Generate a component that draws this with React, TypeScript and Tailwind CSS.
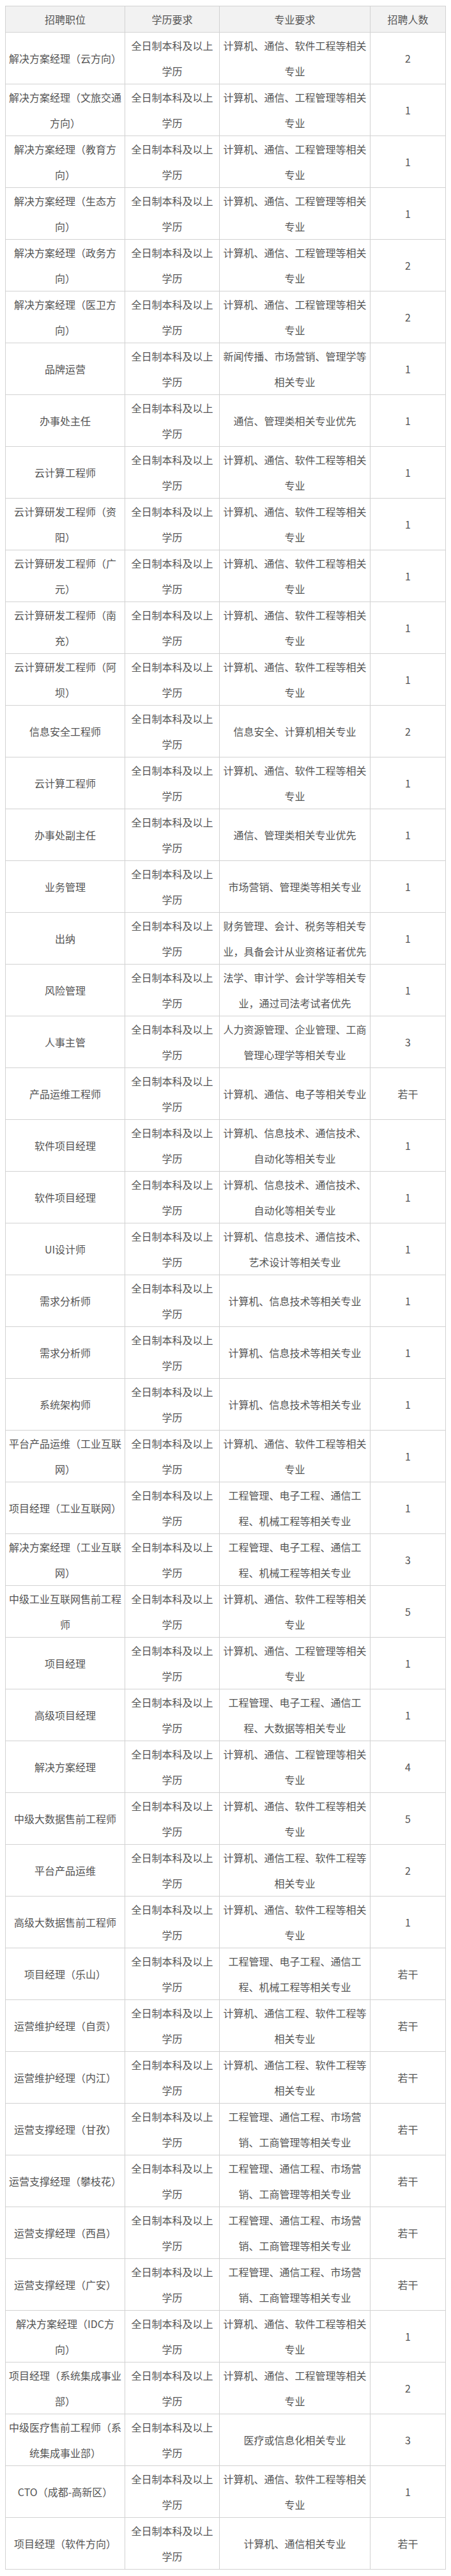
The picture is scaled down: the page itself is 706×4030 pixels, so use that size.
import React from "react";

type Row = [string, string, string];

const rows: Row[] = [
  ["解决方案经理（云方向）", "计算机、通信、软件工程等相关专业", "2"],
  ["解决方案经理（文旅交通方向）", "计算机、通信、工程管理等相关专业", "1"],
  ["解决方案经理（教育方向）", "计算机、通信、工程管理等相关专业", "1"],
  ["解决方案经理（生态方向）", "计算机、通信、工程管理等相关专业", "1"],
  ["解决方案经理（政务方向）", "计算机、通信、工程管理等相关专业", "2"],
  ["解决方案经理（医卫方向）", "计算机、通信、工程管理等相关专业", "2"],
  ["品牌运营", "新闻传播、市场营销、管理学等相关专业", "1"],
  ["办事处主任", "通信、管理类相关专业优先", "1"],
  ["云计算工程师", "计算机、通信、软件工程等相关专业", "1"],
  ["云计算研发工程师（资阳）", "计算机、通信、软件工程等相关专业", "1"],
  ["云计算研发工程师（广元）", "计算机、通信、软件工程等相关专业", "1"],
  ["云计算研发工程师（南充）", "计算机、通信、软件工程等相关专业", "1"],
  ["云计算研发工程师（阿坝）", "计算机、通信、软件工程等相关专业", "1"],
  ["信息安全工程师", "信息安全、计算机相关专业", "2"],
  ["云计算工程师", "计算机、通信、软件工程等相关专业", "1"],
  ["办事处副主任", "通信、管理类相关专业优先", "1"],
  ["业务管理", "市场营销、管理类等相关专业", "1"],
  ["出纳", "财务管理、会计、税务等相关专业，具备会计从业资格证者优先", "1"],
  ["风险管理", "法学、审计学、会计学等相关专业，通过司法考试者优先", "1"],
  ["人事主管", "人力资源管理、企业管理、工商管理心理学等相关专业", "3"],
  ["产品运维工程师", "计算机、通信、电子等相关专业", "若干"],
  ["软件项目经理", "计算机、信息技术、通信技术、自动化等相关专业", "1"],
  ["软件项目经理", "计算机、信息技术、通信技术、自动化等相关专业", "1"],
  ["UI设计师", "计算机、信息技术、通信技术、艺术设计等相关专业", "1"],
  ["需求分析师", "计算机、信息技术等相关专业", "1"],
  ["需求分析师", "计算机、信息技术等相关专业", "1"],
  ["系统架构师", "计算机、信息技术等相关专业", "1"],
  ["平台产品运维（工业互联网）", "计算机、通信、软件工程等相关专业", "1"],
  ["项目经理（工业互联网）", "工程管理、电子工程、通信工程、机械工程等相关专业", "1"],
  ["解决方案经理（工业互联网）", "工程管理、电子工程、通信工程、机械工程等相关专业", "3"],
  ["中级工业互联网售前工程师", "计算机、通信、软件工程等相关专业", "5"],
  ["项目经理", "计算机、通信、工程管理等相关专业", "1"],
  ["高级项目经理", "工程管理、电子工程、通信工程、大数据等相关专业", "1"],
  ["解决方案经理", "计算机、通信、工程管理等相关专业", "4"],
  ["中级大数据售前工程师", "计算机、通信、软件工程等相关专业", "5"],
  ["平台产品运维", "计算机、通信工程、软件工程等相关专业", "2"],
  ["高级大数据售前工程师", "计算机、通信、软件工程等相关专业", "1"],
  ["项目经理（乐山）", "工程管理、电子工程、通信工程、机械工程等相关专业", "若干"],
  ["运营维护经理（自贡）", "计算机、通信工程、软件工程等相关专业", "若干"],
  ["运营维护经理（内江）", "计算机、通信工程、软件工程等相关专业", "若干"],
  ["运营支撑经理（甘孜）", "工程管理、通信工程、市场营销、工商管理等相关专业", "若干"],
  ["运营支撑经理（攀枝花）", "工程管理、通信工程、市场营销、工商管理等相关专业", "若干"],
  ["运营支撑经理（西昌）", "工程管理、通信工程、市场营销、工商管理等相关专业", "若干"],
  ["运营支撑经理（广安）", "工程管理、通信工程、市场营销、工商管理等相关专业", "若干"],
  ["解决方案经理（IDC方向）", "计算机、通信、软件工程等相关专业", "1"],
  ["项目经理（系统集成事业部）", "计算机、通信、工程管理等相关专业", "2"],
  ["中级医疗售前工程师（系统集成事业部）", "医疗或信息化相关专业", "3"],
  ["CTO（成都-高新区）", "计算机、通信、软件工程等相关专业", "1"],
  ["项目经理（软件方向）", "计算机、通信相关专业", "若干"],
];

const cell =
  "border border-[#d2d2d2] px-[5px] py-0 text-center align-middle leading-[40px]";

export default function App() {
  return (
    <div
      className="bg-white pl-[8px] pt-[9px] pb-[10px] text-[16px] text-[#555555]"
      style={{ fontFamily: '"Noto Sans CJK SC", "Noto Sans", sans-serif' }}
    >
      <table className="w-[689px] table-fixed border-collapse border border-[#d2d2d2]">
        <colgroup>
          <col className="w-[187px]" />
          <col className="w-[148px]" />
          <col className="w-[236px]" />
          <col className="w-[118px]" />
        </colgroup>
        <thead>
          <tr className="bg-[#f2f2f2]">
            <th className={`${cell} font-normal`}>招聘职位</th>
            <th className={`${cell} font-normal`}>学历要求</th>
            <th className={`${cell} font-normal`}>专业要求</th>
            <th className={`${cell} font-normal`}>招聘人数</th>
          </tr>
        </thead>
        <tbody>
          {rows.map((r, i) => (
            <tr key={i} className="h-[81px]">
              <td className={cell}>{r[0]}</td>
              <td className={cell}>全日制本科及以上学历</td>
              <td className={cell}>{r[1]}</td>
              <td className={cell}>{r[2]}</td>
            </tr>
          ))}
        </tbody>
      </table>
    </div>
  );
}
